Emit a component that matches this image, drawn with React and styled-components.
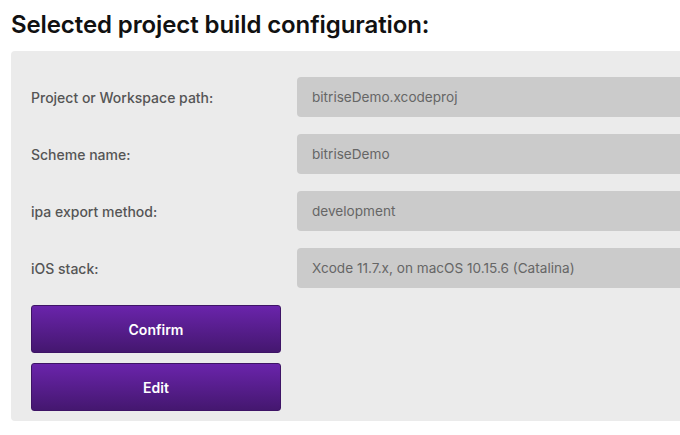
import styled, { createGlobalStyle } from 'styled-components'

const GlobalStyle = createGlobalStyle`
  html, body {
    margin: 0;
    padding: 0;
    overflow: hidden;
    background: #fff;
    font-family: Inter, Lato, sans-serif;
  }
`

const Page = styled.div`
  padding: 10px 0 0 11px;
  width: 900px;
`

const Title = styled.h2`
  margin: 0 0 12px;
  font-size: 24px;
  font-weight: 600;
  line-height: 29px;
  letter-spacing: -0.1px;
  color: #111;
`

const Panel = styled.div`
  background: #ebebeb;
  border-radius: 4px;
  padding: 26px 20px 10px;
`

const Row = styled.div`
  display: grid;
  grid-template-columns: 266px 1fr;
  align-items: center;
  height: 40px;
  margin-bottom: 17px;
`

const Label = styled.div`
  font-size: 14px;
  font-weight: 500;
  color: #555;
`

const Value = styled.div`
  height: 40px;
  display: flex;
  align-items: center;
  padding: 0 15px;
  background: #cbcbcb;
  border-radius: 4px;
  font-size: 13.6px;
  color: #666;
`

const Actions = styled.div`
  display: flex;
  flex-direction: column;
  gap: 10px;
  width: 250px;
`

const Button = styled.button`
  height: 48px;
  border: 1px solid #3e1466;
  border-radius: 3px;
  background: linear-gradient(#6a24ab, #44176f);
  color: #fff;
  font-family: inherit;
  font-size: 14px;
  font-weight: 600;
  cursor: pointer;
`

const config = [
  ['Project or Workspace path:', 'bitriseDemo.xcodeproj'],
  ['Scheme name:', 'bitriseDemo'],
  ['ipa export method:', 'development'],
  ['iOS stack:', 'Xcode 11.7.x, on macOS 10.15.6 (Catalina)'],
]

const App = () => {
  return (
    <Page>
      <GlobalStyle />
      <Title>Selected project build configuration:</Title>
      <Panel>
        {config.map(([label, value]) => (
          <Row key={label}>
            <Label>{label}</Label>
            <Value>{value}</Value>
          </Row>
        ))}
        <Actions>
          <Button>Confirm</Button>
          <Button>Edit</Button>
        </Actions>
      </Panel>
    </Page>
  )
}

export default App
